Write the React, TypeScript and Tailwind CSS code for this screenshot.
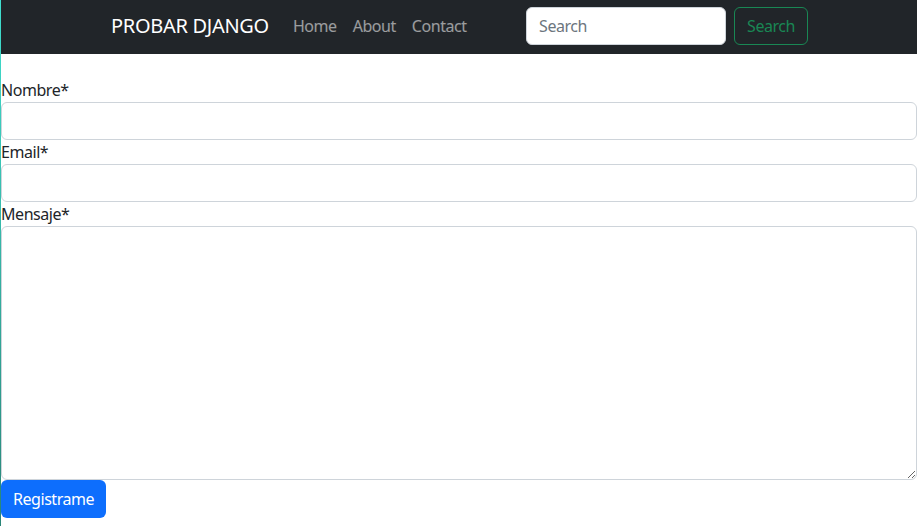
const App = () => {
  return (
    <div
      className="min-h-[526px] bg-white text-[#212529] text-base tracking-[-0.45px] border-l [border-image:linear-gradient(to_bottom,#40e0d0,#2a8577)_1]"
      style={{ fontFamily: '"Noto Sans", "Open Sans", sans-serif' }}
    >
      <nav className="h-[54px] bg-[#212529] flex items-center">
        <div className="w-[720px] mx-auto px-3 flex items-center -mt-0.5">
          <a href="#" className="text-white text-[20px] mr-4 leading-[30px] tracking-[-0.3px]">
            PROBAR DJANGO
          </a>
          <ul className="flex items-center">
            {["Home", "About", "Contact"].map((item) => (
              <li key={item}>
                <a href="#" className="px-2 text-white/55 hover:text-white/75">
                  {item}
                </a>
              </li>
            ))}
          </ul>
          <form className="ml-auto flex items-center gap-2 -mr-px">
            <input
              type="search"
              placeholder="Search"
              className="w-[200px] h-[38px] bg-white rounded-md border border-[#ced4da] px-3 text-[#212529] placeholder:text-[#6c757d] outline-none"
            />
            <button
              type="button"
              className="h-[38px] px-3 rounded-md border border-[#198754] text-[#198754] hover:bg-[#198754] hover:text-white"
            >
              Search
            </button>
          </form>
        </div>
      </nav>

      <form className="pt-6 flex flex-col">
        <label className="leading-6">Nombre*</label>
        <input type="text" className="h-[38px] w-full rounded-md border border-[#ced4da] px-3 outline-none" />
        <label className="leading-6">Email*</label>
        <input type="email" className="h-[38px] w-full rounded-md border border-[#ced4da] px-3 outline-none" />
        <label className="leading-6">Mensaje*</label>
        <textarea className="h-[254px] w-full rounded-md border border-[#ced4da] px-3 py-1.5 outline-none resize-y" />
        <div>
          <button
            type="button"
            className="h-[38px] px-3 rounded-md bg-[#0d6efd] text-white hover:bg-[#0b5ed7]"
          >
            Registrame
          </button>
        </div>
      </form>
    </div>
  );
};

export default App;
